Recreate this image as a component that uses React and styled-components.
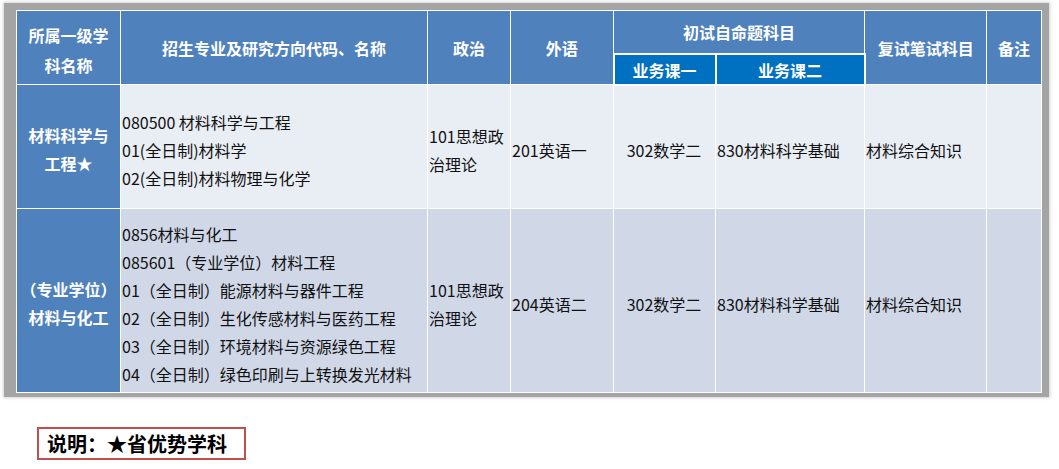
import React from 'react'
import styled, { createGlobalStyle } from 'styled-components'

const GlobalStyle = createGlobalStyle`
    body {
        margin: 0;
        background: #fff;
        font-family: "Noto Sans CJK SC", "Noto Sans", sans-serif;
    }
`

const widths = [104, 307, 83, 103, 102, 149, 122, 55]

const rows = [
    {
        tone: `light`,
        name: [`材料科学与`, `工程★`],
        majors: [`080500 材料科学与工程`, `01(全日制)材料学`, `02(全日制)材料物理与化学`],
        politics: `101思想政治理论`,
        language: `201英语一`,
        course1: `302数学二`,
        course2: `830材料科学基础`,
        retest: `材料综合知识`,
        height: 124,
    },
    {
        tone: `dark`,
        name: [`（专业学位）`, `材料与化工`],
        majors: [
            `0856材料与化工`,
            `085601（专业学位）材料工程`,
            `01（全日制）能源材料与器件工程`,
            `02（全日制）生化传感材料与医药工程`,
            `03（全日制）环境材料与资源绿色工程`,
            `04（全日制）绿色印刷与上转换发光材料`,
        ],
        politics: `101思想政治理论`,
        language: `204英语二`,
        course1: `302数学二`,
        course2: `830材料科学基础`,
        retest: `材料综合知识`,
        height: 184,
    },
]

const App = () => (
    <Page>
        <GlobalStyle />
        <Frame>
            <Table>
                <colgroup>
                    {widths.map((w, i) => (
                        <col key={i} style={{ width: w }} />
                    ))}
                </colgroup>
                <thead>
                    <HeadRow height={43}>
                        <HeadCell rowSpan={2} tall>
                            所属一级学
                            <br />
                            科名称
                        </HeadCell>
                        <HeadCell rowSpan={2}>招生专业及研究方向代码、名称</HeadCell>
                        <HeadCell rowSpan={2}>政治</HeadCell>
                        <HeadCell rowSpan={2}>外语</HeadCell>
                        <HeadCell colSpan={2}>初试自命题科目</HeadCell>
                        <HeadCell rowSpan={2}>复试笔试科目</HeadCell>
                        <HeadCell rowSpan={2}>备注</HeadCell>
                    </HeadRow>
                    <HeadRow height={31}>
                        <SubHeadCell>业务课一</SubHeadCell>
                        <SubHeadCell>业务课二</SubHeadCell>
                    </HeadRow>
                </thead>
                <tbody>
                    {rows.map(row => (
                        <BodyRow key={row.language} tone={row.tone} height={row.height}>
                            <NameCell>
                                {row.name[0]}
                                <br />
                                {row.name[1]}
                            </NameCell>
                            <BodyCell>
                                {row.majors.map(m => (
                                    <Line key={m}>{m}</Line>
                                ))}
                            </BodyCell>
                            <BodyCell>{row.politics}</BodyCell>
                            <BodyCell>{row.language}</BodyCell>
                            <BodyCell align={`center`}>{row.course1}</BodyCell>
                            <BodyCell>{row.course2}</BodyCell>
                            <BodyCell>{row.retest}</BodyCell>
                            <BodyCell />
                        </BodyRow>
                    ))}
                </tbody>
            </Table>
        </Frame>
        <Note>说明：★省优势学科</Note>
    </Page>
)

export default App

const Page = styled.div`
    width: 1059px;
    padding-top: 3px;
`

const Frame = styled.div`
    box-sizing: border-box;
    width: 1045px;
    margin-left: 4px;
    padding: 7px 8px 4px 12px;
    background: #a4a4a4;
    box-shadow: 0 0 3px 1px rgba(0, 0, 0, 0.18);
`

const Table = styled.table`
    width: 1025px;
    table-layout: fixed;
    border-collapse: collapse;
    font-size: 16px;
    color: #111;
`

const HeadRow = styled.tr`
    height: ${p => p.height}px;
`

const HeadCell = styled.th`
    background: #4f81bd;
    color: #fff;
    font-weight: 700;
    font-size: 16px;
    line-height: ${p => (p.tall ? 30 : 22)}px;
    text-align: center;
    vertical-align: middle;
    padding: ${p => (p.tall ? `4px 4px 0` : `0 4px`)};
    border: 1px solid #fff;
`

const SubHeadCell = styled.th`
    background: #0070c0;
    color: #fff;
    font-weight: 700;
    font-size: 16px;
    line-height: 22px;
    text-align: center;
    padding: 2px 0 0;
    border: 2px solid #fff;
`

const BodyRow = styled.tr`
    height: ${p => p.height}px;
    background: ${p => (p.tone === `light` ? `#e9edf4` : `#d0d8e8`)};
`

const NameCell = styled.td`
    background: #4f81bd;
    color: #fff;
    font-weight: 700;
    text-align: center;
    line-height: 28px;
    padding: 5px 0 0;
    white-space: nowrap;
    border: 1px solid #fff;
`

const BodyCell = styled.td`
    text-align: ${p => p.align || `left`};
    vertical-align: middle;
    line-height: 28px;
    padding: 6px 2px 0 1px;
    border: 1px solid #fff;
`

const Line = styled.div`
    white-space: nowrap;
`

const Note = styled.div`
    display: inline-block;
    margin: 30px 0 0 37px;
    padding: 0 17px 0 8px;
    height: 29px;
    line-height: 30px;
    border: 2px solid #c0504d;
    font-size: 20px;
    font-weight: 700;
    color: #000;
`
